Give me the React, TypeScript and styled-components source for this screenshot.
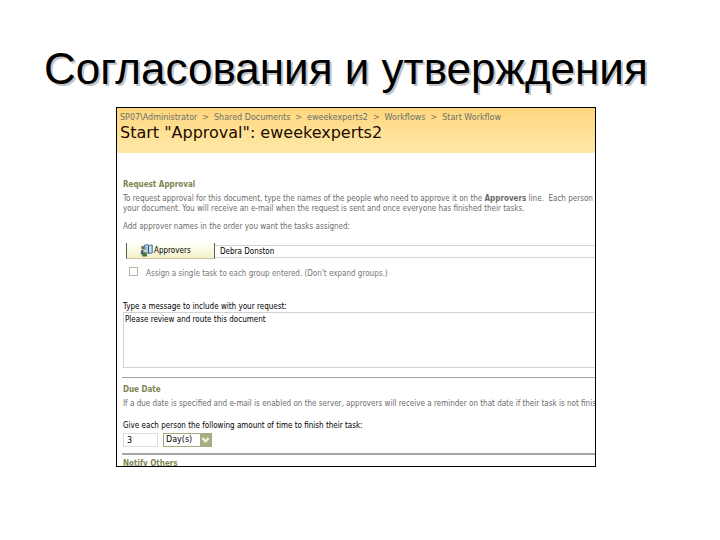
import React from "react";
import styled, { createGlobalStyle } from "styled-components";

const GlobalStyle = createGlobalStyle`
  * { box-sizing: border-box; }
  body { margin: 0; background: #fff; }
`;

const ui = `"DejaVu Sans Condensed", "DejaVu Sans", sans-serif`;
const wide = `"DejaVu Sans", sans-serif`;

const Slide = styled.main`
  padding: 43px 0 0;
`;

const SlideTitle = styled.h1`
  margin: 0 32px 12px 44px;
  font: 400 44px/52px "Liberation Sans", Arial, sans-serif;
  color: #000;
  text-shadow: 2px 2px 0 #c4c4c4;
  white-space: nowrap;
`;

const Panel = styled.section`
  margin: 0 124px 0 116px;
  border: 1px solid #000;
  background: #fff;
  overflow: hidden;
  white-space: nowrap;
  font: 8px/10px ${ui};
  color: #000;
`;

const Banner = styled.header`
  height: 45px;
  padding: 4px 3px;
  background: linear-gradient(#ffd67e, #ffe9a9);
`;

const Crumbs = styled.nav`
  display: flex;
  gap: 5px;
  font: 8px/12px ${wide};
  color: #85765a;
`;

const Crumb = styled.a`
  color: #6c7069;
  text-decoration: none;
`;

const PageTitle = styled.h2`
  margin: 0;
  font: 400 16px/18px ${wide};
  color: #1c0d00;
`;

const Body = styled.form`
  padding: 27px 0 0 6px;
`;

const SectionTitle = styled.h3`
  margin: 0;
  font: 700 8px/10px ${ui};
  color: #7f8450;
`;

const Note = styled.p<{ $top: number }>`
  margin: ${(p) => p.$top}px 0 0;
  color: #6c6c6c;
`;

const FieldLabel = styled.label<{ $top: number }>`
  display: block;
  margin-top: ${(p) => p.$top}px;
`;

const Row = styled.div<{ $top: number; $left: number; $gap: number }>`
  display: flex;
  align-items: center;
  gap: ${(p) => p.$gap}px;
  margin-top: ${(p) => p.$top}px;
  padding-left: ${(p) => p.$left}px;
`;

const CheckRow = styled(Row)`
  align-items: flex-start;
`;

const PickButton = styled.button`
  display: flex;
  align-items: center;
  gap: 1px;
  width: 89px;
  height: 16px;
  padding: 0 0 0 13px;
  border: 0;
  border-left: 1px solid #54604a;
  border-right: 1px solid #54604a;
  border-bottom: 1px solid #c9c69c;
  background: linear-gradient(#fffffa, #f3f1c9);
  font: 8px/10px ${ui};
  color: #000;
`;

const PeopleInput = styled.input`
  flex: 1;
  min-width: 0;
  height: 13px;
  padding: 0 5px;
  border: solid #d2d2d2;
  border-width: 1px 0;
  background: #fff;
  font: 8px/10px ${ui};
  color: #000;
`;

const Check = styled.input`
  appearance: none;
  width: 9px;
  height: 9px;
  margin: 0;
  border: 1px solid #b9b5a4;
  background: #fff;
`;

const CheckLabel = styled.label`
  padding-top: 2px;
  color: #777;
`;

const Message = styled.textarea`
  display: block;
  width: 100%;
  height: 56px;
  padding: 2px 1px;
  border: 1px solid #d2d2d2;
  border-right: 0;
  background: #fff;
  resize: none;
  font: 8px/10px ${ui};
  color: #000;
`;

const Rule = styled.hr<{ $top: number; $weight: number }>`
  margin: ${(p) => p.$top}px 0 0 -1px;
  border: 0;
  height: ${(p) => p.$weight}px;
  background: #a5a5a5;
`;

const DueTitle = styled(SectionTitle)`
  margin-top: 7px;
`;

const Amount = styled.input`
  width: 35px;
  height: 14px;
  padding: 1px 3px 0;
  border: 1px solid #dcdcdc;
  background: #fff;
  font: 8px/10px ${wide};
  color: #000;
`;

const SelectBox = styled.span`
  display: grid;
  width: 49px;
  height: 14px;
  border: 1px solid #a3ab7d;
  background: #fff;
`;

const Select = styled.select`
  grid-area: 1 / 1;
  appearance: none;
  border: 0;
  padding: 0 0 0 2px;
  background: transparent;
  font: 8px/10px ${wide};
  color: #000;
`;

const Arrow = styled.svg`
  grid-area: 1 / 1;
  justify-self: end;
  width: 12px;
  height: 12px;
  pointer-events: none;
`;

const Teaser = styled.div`
  height: 11px;
  padding-top: 4px;
  overflow: hidden;
`;

const PeopleIcon = () => (
  <svg width="13" height="13" viewBox="0 0 13 13" aria-hidden="true">
    <path d="M4.5 1 8 .6l.8.8L12.3 1v8L8.8 9.6 8 9H5z" fill="#a9cde6" stroke="#3d6189" strokeWidth=".8" />
    <path d="M8.5 1.5v7.7" stroke="#315881" strokeWidth="1" />
    <path d="M10 2.5v5.5" stroke="#e3f3fa" strokeWidth="1" />
    <circle cx="3" cy="3.6" r="1.9" fill="#737268" />
    <path d="M.8 10.5V7.7Q1 5.6 3 5.6T5.3 7.5v3z" fill="#48637c" />
    <circle cx="4.8" cy="7" r="1.6" fill="#d6d0ad" />
    <path d="M2.2 12.6q0-3.8 2.5-3.8t2.5 3.8z" fill="#3f7a3b" />
  </svg>
);

const trail = ["SP07\\Administrator", "Shared Documents", "eweekexperts2", "Workflows", "Start Workflow"];

export default function App() {
  return (
    <>
      <GlobalStyle />
      <Slide>
        <SlideTitle>Согласования и утверждения</SlideTitle>
        <Panel>
          <Banner>
            <Crumbs aria-label="Breadcrumb">
              {trail.map((name, i) => (
                <React.Fragment key={name}>
                  {i > 0 && <span>&gt;</span>}
                  <Crumb href="#">{name}</Crumb>
                </React.Fragment>
              ))}
            </Crumbs>
            <PageTitle>Start "Approval": eweekexperts2</PageTitle>
          </Banner>
          <Body>
            <SectionTitle>Request Approval</SectionTitle>
            <Note $top={4}>
              To request approval for this document, type the names of the people who need to approve it on the{" "}
              <b>Approvers</b> line. &nbsp;Each person
              <br />
              your document. You will receive an e-mail when the request is sent and once everyone has finished their tasks.
            </Note>
            <Note $top={8}>Add approver names in the order you want the tasks assigned:</Note>
            <Row $top={11} $left={3} $gap={0}>
              <PickButton type="button">
                <PeopleIcon />
                Approvers
              </PickButton>
              <PeopleInput aria-label="Approvers" defaultValue="Debra Donston" />
            </Row>
            <CheckRow $top={8} $left={6} $gap={8}>
              <Check type="checkbox" id="single" />
              <CheckLabel htmlFor="single">
                Assign a single task to each group entered. (Don't expand groups.)
              </CheckLabel>
            </CheckRow>
            <FieldLabel $top={23} htmlFor="message">
              Type a message to include with your request:
            </FieldLabel>
            <Message id="message" defaultValue="Please review and route this document" />
            <Rule $top={9} $weight={1} />
            <DueTitle>Due Date</DueTitle>
            <Note $top={4}>
              If a due date is specified and e-mail is enabled on the server, approvers will receive a reminder on that
              date if their task is not finish
            </Note>
            <FieldLabel $top={12} htmlFor="amount">
              Give each person the following amount of time to finish their task:
            </FieldLabel>
            <Row $top={2} $left={0} $gap={5}>
              <Amount id="amount" defaultValue="3" />
              <SelectBox>
                <Select aria-label="Time unit" defaultValue="days">
                  <option value="days">Day(s)</option>
                  <option value="weeks">Week(s)</option>
                </Select>
                <Arrow viewBox="0 0 12 12" aria-hidden="true">
                  <rect x="1" y="0" width="11" height="12" fill="#a3b183" />
                  <path d="M3.5 4 6.5 7.5 9.5 4" fill="none" stroke="#f5f8e8" strokeWidth="2" />
                </Arrow>
              </SelectBox>
            </Row>
            <Rule $top={6} $weight={2} />
            <Teaser>
              <SectionTitle>Notify Others</SectionTitle>
            </Teaser>
          </Body>
        </Panel>
      </Slide>
    </>
  );
}
